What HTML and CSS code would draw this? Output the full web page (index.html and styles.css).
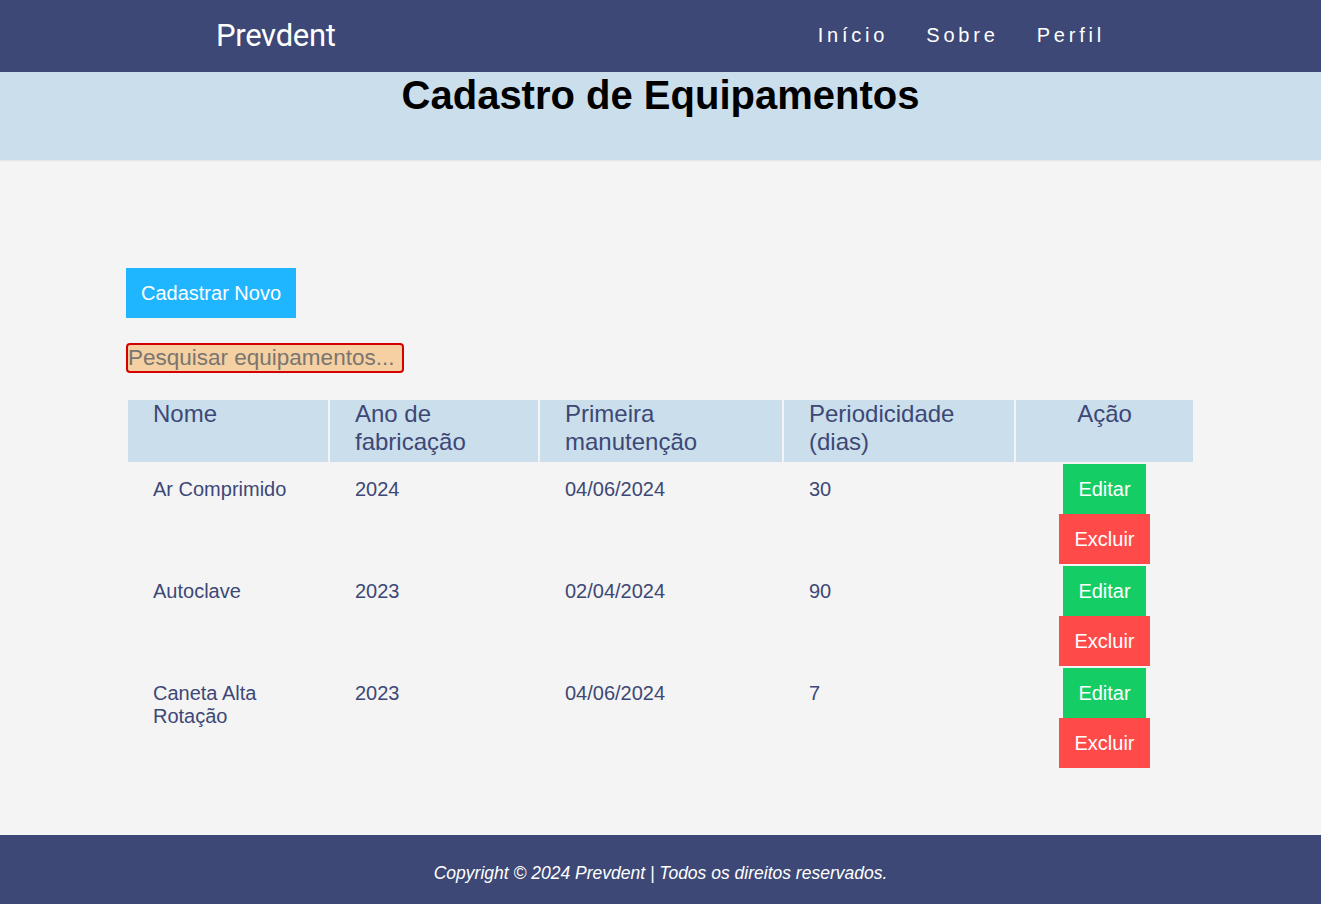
FILE: index.html
```html
<!DOCTYPE html>
<html lang="pt-BR">
<head>
<meta charset="utf-8">
<title>Prevdent - Cadastro de Equipamentos</title>
<link rel="stylesheet" href="styles.css">
</head>
<body>
<header class="topbar">
  <div class="topbar-inner">
    <div class="logo">Prevdent</div>
    <nav class="nav">
      <a href="#">Início</a>
      <a href="#">Sobre</a>
      <a href="#">Perfil</a>
    </nav>
  </div>
</header>
<section class="banner">
  <h1>Cadastro de Equipamentos</h1>
</section>
<main class="content">
  <button class="btn btn-new">Cadastrar Novo</button>
  <div class="search-row">
    <input class="search" type="text" placeholder="Pesquisar equipamentos...">
  </div>
  <table class="grid">
    <thead>
      <tr>
        <th class="c1">Nome</th>
        <th class="c2">Ano de fabricação</th>
        <th class="c3">Primeira manutenção</th>
        <th class="c4">Periodicidade (dias)</th>
        <th class="c5 center">Ação</th>
      </tr>
    </thead>
    <tbody>
      <tr>
        <td>Ar Comprimido</td>
        <td>2024</td>
        <td>04/06/2024</td>
        <td>30</td>
        <td class="actions"><button class="btn btn-edit">Editar</button><button class="btn btn-del">Excluir</button></td>
      </tr>
      <tr>
        <td>Autoclave</td>
        <td>2023</td>
        <td>02/04/2024</td>
        <td>90</td>
        <td class="actions"><button class="btn btn-edit">Editar</button><button class="btn btn-del">Excluir</button></td>
      </tr>
      <tr>
        <td>Caneta Alta Rotação</td>
        <td>2023</td>
        <td>04/06/2024</td>
        <td>7</td>
        <td class="actions"><button class="btn btn-edit">Editar</button><button class="btn btn-del">Excluir</button></td>
      </tr>
    </tbody>
  </table>
</main>
<footer class="footer">
  <p>Copyright © 2024 Prevdent | Todos os direitos reservados.</p>
</footer>
</body>
</html>
```
FILE: styles.css
```css
* { box-sizing: border-box; }
html, body { margin: 0; padding: 0; }
body {
  background: #f4f4f4;
  font-family: "Liberation Sans", Arial, sans-serif;
  color: #3d4876;
}
.topbar {
  background: #3d4876;
  height: 72px;
}
.topbar-inner {
  height: 72px;
  padding: 0 216px 0 216px;
  display: flex;
  align-items: center;
  justify-content: space-between;
}
.logo {
  font-family: Roboto, "Liberation Sans", sans-serif;
  font-size: 31px;
  color: #ffffff;
  letter-spacing: -0.3px;
  padding-bottom: 2px;
}
.nav {
  display: flex;
  gap: 38px;
}
.nav a {
  color: #ffffff;
  text-decoration: none;
  font-size: 20px;
  letter-spacing: 3.8px;
  padding-bottom: 1px;
}
.banner {
  background: #cbdeeb;
  height: 88px;
  box-shadow: 0 1px 2px rgba(0,0,0,0.08);
  text-align: center;
}
.banner h1 {
  margin: 0;
  font-size: 40px;
  line-height: 47px;
  color: #000;
  font-weight: bold;
}
.content {
  padding: 108px 126px 65px;
}
.btn {
  border: none;
  font-family: "Liberation Sans", Arial, sans-serif;
  font-size: 20px;
  color: #fff;
  height: 50px;
  padding: 0 15px;
  cursor: pointer;
}
.btn-new {
  background: #1fb6ff;
  display: block;
}
.search-row {
  margin-top: 25px;
}
.search {
  width: 278px;
  height: 30px;
  border: 2px solid #d40000;
  border-radius: 4px;
  background: #f5d0a3;
  font-family: "Liberation Sans", Arial, sans-serif;
  font-size: 22.5px;
  padding: 0;
  display: block;
}
.search::placeholder { color: #7a7570; }
.grid {
  margin-top: 25px;
  width: 100%;
  border-collapse: separate;
  border-spacing: 2px;
  table-layout: fixed;
}
.grid th {
  background: #cbdeeb;
  font-weight: normal;
  font-size: 24px;
  line-height: 28px;
  text-align: left;
  vertical-align: top;
  padding: 0 25px 6px;
  height: 62px;
}
.grid th.center { text-align: center; }
.c1 { width: 200px; }
.c2 { width: 208px; }
.c3 { width: 242px; }
.c4 { width: 230px; }
.grid td {
  font-size: 20px;
  line-height: 23px;
  vertical-align: top;
  padding: 14px 25px;
}
.grid td.actions {
  padding: 0;
  text-align: center;
}
.actions .btn {
  display: block;
  margin: 0 auto;
}
.btn-edit { background: #14cd65; }
.btn-del { background: #ff4a4a; }
.footer {
  background: #3d4876;
  height: 69px;
  display: flex;
  align-items: center;
  justify-content: center;
}
.footer p {
  margin: 0;
  color: #fff;
  font-style: italic;
  font-size: 17.5px;
  padding-top: 7px;
}
```
